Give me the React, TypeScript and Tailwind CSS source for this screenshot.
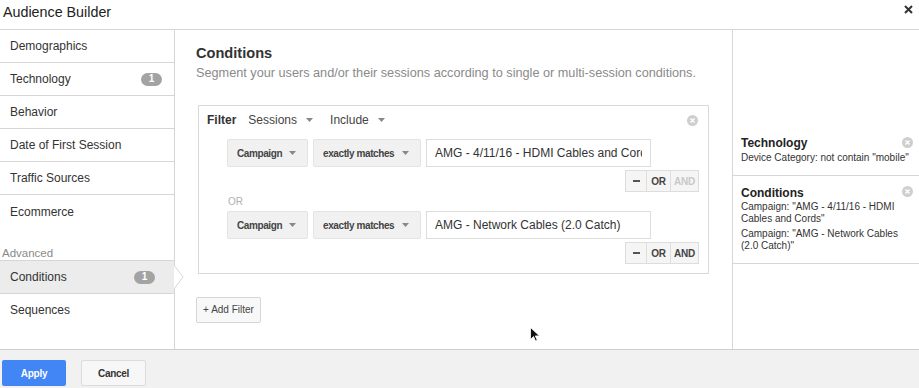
import React from 'react';

const Caret = ({ className = '' }: { className?: string }) => (
  <svg width="7" height="4" viewBox="0 0 7 4" className={className}>
    <path d="M0 0h7L3.5 4z" fill="#888" />
  </svg>
);

const CloseDot = () => (
  <svg width="11" height="11" viewBox="0 0 11 11">
    <circle cx="5.5" cy="5.5" r="5.5" fill="#cfcfcf" />
    <path d="M3.5 3.5l4 4M7.5 3.5l-4 4" stroke="#fff" strokeWidth="1.4" />
  </svg>
);

const Badge = () => (
  <span className="flex h-[13px] w-[21px] items-center justify-center rounded-full bg-[#a3a3a3] text-[10px] font-bold leading-none text-white">
    1
  </span>
);

const navItems = [
  { label: 'Demographics' },
  { label: 'Technology', badge: true },
  { label: 'Behavior' },
  { label: 'Date of First Session' },
  { label: 'Traffic Sources' },
  { label: 'Ecommerce', last: true },
];

const Dropdown = ({ label, width }: { label: string; width: string }) => (
  <div
    className={`flex h-[28px] items-center justify-between whitespace-nowrap rounded-[2px] border border-[#e3e3e3] bg-[#f1f1f1] pl-[9px] pr-[11px] text-[10px] font-bold tracking-[-0.4px] text-[#444] ${width}`}
  >
    <span>{label}</span>
    <Caret />
  </div>
);

const ConditionRow = ({ value, andDisabled }: { value: string; andDisabled?: boolean }) => (
  <div className="flex flex-col">
    <div className="flex gap-[5px]">
      <Dropdown label="Campaign" width="w-[81px]" />
      <Dropdown label="exactly matches" width="w-[108px]" />
      <input
        readOnly
        value={value}
        className="h-[28px] w-[225px] border border-[#ddd] bg-white px-[8px] text-[12px] text-[#333] outline-none"
      />
    </div>
    <div className="mt-[3px] flex justify-end">
      <div className="flex h-[22px] border border-[#ddd] bg-[#f5f5f5] text-[10px] font-bold tracking-[-0.3px]">
        <span className="flex w-[21px] items-center justify-center border-r border-[#ddd] text-[#444]">
          <span className="block h-[2px] w-[7px] bg-[#555]" />
        </span>
        <span className="flex w-[24px] items-center justify-center border-r border-[#ddd] text-[#444]">OR</span>
        <span className={`flex w-[27px] items-center justify-center ${andDisabled ? 'text-[#c8c8c8]' : 'text-[#444]'}`}>AND</span>
      </div>
    </div>
  </div>
);

export default function App() {
  return (
    <div className="relative flex h-[388px] w-[919px] flex-col overflow-hidden bg-white font-['Liberation_Sans',Arial,sans-serif] text-[#333]">
      {/* header */}
      <div className="flex h-[30px] shrink-0 items-center justify-between border-b border-[#d6d6d6] pl-[3px] pr-[6px]">
        <span className="mb-[3px] text-[14.3px] text-[#222]">Audience Builder</span>
        <svg width="9" height="9" viewBox="0 0 9 9" className="mb-[10px]">
          <path d="M1 1l7 7M8 1L1 8" stroke="#333" strokeWidth="2" />
        </svg>
      </div>

      {/* body */}
      <div className="flex min-h-0 flex-1">
        {/* sidebar */}
        <div className="w-[175px] shrink-0 border-r border-[#d6d6d6]">
          {navItems.map((item) => (
            <div
              key={item.label}
              className={`flex h-[33px] items-center justify-between pl-[10px] pr-[12px] text-[12px] ${item.last ? '' : 'border-b border-[#d6d6d6]'}`}
            >
              <span>{item.label}</span>
              {item.badge && <Badge />}
            </div>
          ))}
          <div className="mt-[18px] pl-[2px] text-[11.5px] leading-[14px] text-[#8a8a8a]">Advanced</div>
          <div className="relative flex h-[34px] items-center justify-between border-y border-[#d6d6d6] bg-[#ececec] pl-[10px] pr-[19px] text-[12px]">
            <span>Conditions</span>
            <Badge />
            <svg width="10" height="24" viewBox="0 0 10 24" className="absolute right-[-10px] top-[4px]">
              <path d="M0 0L9 12L0 24" fill="#fff" stroke="#d6d6d6" strokeWidth="1" />
            </svg>
          </div>
          <div className="flex h-[32px] items-center pl-[10px] text-[12px]">Sequences</div>
        </div>

        {/* main */}
        <div className="flex flex-1 flex-col border-r border-[#d6d6d6] pl-[21px] pt-[14px]">
          <h2 className="text-[14.6px] font-bold leading-[18px] text-[#333]">Conditions</h2>
          <p className="mt-[3px] text-[12.7px] leading-[16px] text-[#8a8a8a]">
            Segment your users and/or their sessions according to single or multi-session conditions.
          </p>

          <div className="ml-[2px] mt-[24px] w-[511px] border border-[#d9d9d9] pb-[9px] pl-[8px] pr-[9px] pt-[6px]">
            <div className="flex h-[16px] items-center text-[12px]">
              <span className="font-bold text-[#333]">Filter</span>
              <span className="ml-[12px] text-[#444]">Sessions</span>
              <Caret className="ml-[9px]" />
              <span className="ml-[17px] text-[#444]">Include</span>
              <Caret className="ml-[9px]" />
              <span className="ml-auto mr-[1px]">
                <CloseDot />
              </span>
            </div>
            <div className="ml-[20px] mt-[11px]">
              <ConditionRow value="AMG - 4/11/16 - HDMI Cables and Cords" andDisabled />
              <div className="mt-[4px] pl-[1px] text-[10px] leading-[12px] text-[#b0b0b0]">OR</div>
              <div className="mt-[3px]">
                <ConditionRow value="AMG - Network Cables (2.0 Catch)" />
              </div>
            </div>
          </div>

          <div className="mt-[22px]">
            <button className="h-[26px] w-[65px] rounded-[2px] border border-[#d6d6d6] bg-[#f8f8f8] text-[10px] text-[#444]">
              + Add Filter
            </button>
          </div>
        </div>

        {/* summary */}
        <div className="w-[186px] shrink-0 pt-[97px]">
          <div className="relative border-b border-[#d6d6d6] pb-[11px] pl-[8px] pr-[10px] pt-[8px]">
            <div className="text-[12px] font-bold leading-[16px] text-[#222]">Technology</div>
            <div className="whitespace-nowrap text-[10px] leading-[13px] text-[#333]">Device Category: not contain "mobile"</div>
            <span className="absolute right-[6px] top-[10px]">
              <CloseDot />
            </span>
          </div>
          <div className="relative border-b border-[#d6d6d6] pb-[11px] pl-[8px] pr-[10px] pt-[9px]">
            <div className="text-[12px] font-bold leading-[16px] text-[#222]">Conditions</div>
            <div className="text-[10px] leading-[12px] text-[#333]">Campaign: "AMG - 4/11/16 - HDMI Cables and Cords"</div>
            <div className="mt-[3px] text-[10px] leading-[12px] text-[#333]">Campaign: "AMG - Network Cables (2.0 Catch)"</div>
            <span className="absolute right-[6px] top-[10px]">
              <CloseDot />
            </span>
          </div>
        </div>
      </div>

      {/* footer */}
      <div className="flex h-[39px] shrink-0 items-center gap-[15px] border-t border-[#cfcfcf] bg-[#f1f1f1] pl-[2px] pt-[8px]">
        <button className="h-[26px] w-[64px] rounded-[2px] bg-[#4285f4] text-[10px] font-bold tracking-[-0.3px] text-white">Apply</button>
        <button className="h-[26px] w-[65px] rounded-[2px] border border-[#dcdcdc] bg-[#f7f7f7] text-[10px] font-bold tracking-[-0.3px] text-[#333]">
          Cancel
        </button>
      </div>

      {/* mouse pointer */}
      <svg width="10" height="15" viewBox="0 0 10 15" className="absolute left-[530px] top-[327px]">
        <path d="M0.5 0.5v12l3-3 2 4.5 1.8-.8-2-4.3h4.2z" fill="#111" stroke="#fff" strokeWidth="0.8" />
      </svg>
    </div>
  );
}
